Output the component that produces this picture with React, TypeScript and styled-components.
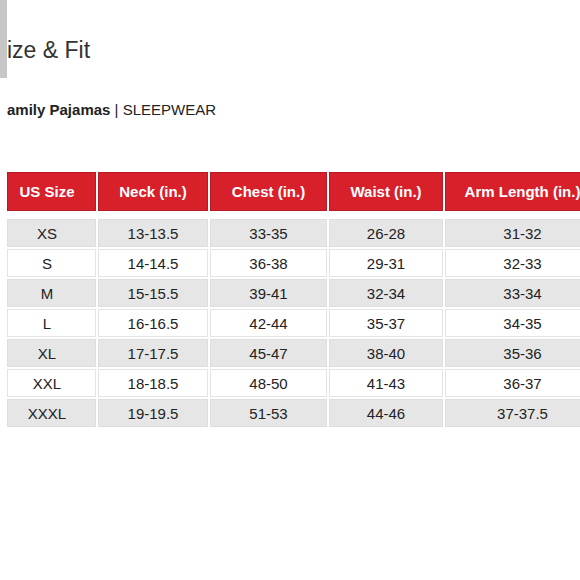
import React, { FC } from 'react';
import styled, { createGlobalStyle } from 'styled-components';

const GlobalStyle = createGlobalStyle`
    html, body {
        margin: 0;
        padding: 0;
        background: #ffffff;
        overflow: hidden;
    }
    body {
        font-family: 'Liberation Sans', Arial, sans-serif;
        color: #222222;
    }
`;

const Side = styled.div`
    position: relative;
    width: 580px;
    height: 580px;
    overflow: hidden;
    padding-left: 7px;
    box-sizing: border-box;
`;

const ScrollThumb = styled.div`
    position: absolute;
    left: 0;
    top: 0;
    width: 7px;
    height: 78px;
    background: #c6c6c6;
`;

const Tittel = styled.h1`
    margin: 37px 0 0 0;
    font-size: 23px;
    line-height: 26px;
    font-weight: 400;
    color: #333333;
`;

const Undertittel = styled.p`
    margin: 38px 0 0 0;
    font-size: 15px;
    line-height: 17px;
    color: #222222;

    strong {
        font-weight: 700;
    }
`;

const Tabell = styled.div`
    margin-top: 54px;
    display: grid;
    grid-template-columns: 89px 110px 117px 114px 155px;
    column-gap: 2px;
    row-gap: 2px;
    width: max-content;
`;

const HodeCelle = styled.div<{ $første: boolean }>`
    height: 39px;
    margin-bottom: 6px;
    box-sizing: border-box;
    display: flex;
    align-items: center;
    justify-content: center;
    padding-right: ${(p) => (p.$første ? '9px' : '0')};
    background: #d8202b;
    border: 1px solid #b51b25;
    color: #ffffff;
    font-size: 15px;
    font-weight: 700;
    white-space: nowrap;
`;

const Celle = styled.div<{ $grå: boolean; $første: boolean }>`
    height: 28px;
    box-sizing: border-box;
    display: flex;
    align-items: center;
    justify-content: center;
    padding-right: ${(p) => (p.$første ? '9px' : '0')};
    background: ${(p) => (p.$grå ? '#e6e6e6' : '#ffffff')};
    border: 1px solid ${(p) => (p.$grå ? '#dedede' : '#e4e4e4')};
    font-size: 15px;
    color: #222222;
`;

const kolonner = ['US Size', 'Neck (in.)', 'Chest (in.)', 'Waist (in.)', 'Arm Length (in.)'];

const rader = [
    ['XS', '13-13.5', '33-35', '26-28', '31-32'],
    ['S', '14-14.5', '36-38', '29-31', '32-33'],
    ['M', '15-15.5', '39-41', '32-34', '33-34'],
    ['L', '16-16.5', '42-44', '35-37', '34-35'],
    ['XL', '17-17.5', '45-47', '38-40', '35-36'],
    ['XXL', '18-18.5', '48-50', '41-43', '36-37'],
    ['XXXL', '19-19.5', '51-53', '44-46', '37-37.5'],
];

const App: FC = () => {
    return (
        <>
            <GlobalStyle />
            <Side>
                <ScrollThumb />
                <Tittel>ize &amp; Fit</Tittel>
                <Undertittel>
                    <strong>amily Pajamas</strong> | SLEEPWEAR
                </Undertittel>
                <Tabell>
                    {kolonner.map((k, j) => (
                        <HodeCelle key={k} $første={j === 0}>
                            {k}
                        </HodeCelle>
                    ))}
                    {rader.map((rad, i) =>
                        rad.map((verdi, j) => (
                            <Celle key={`${i}-${j}`} $grå={i % 2 === 0} $første={j === 0}>
                                {verdi}
                            </Celle>
                        ))
                    )}
                </Tabell>
            </Side>
        </>
    );
};

export default App;
